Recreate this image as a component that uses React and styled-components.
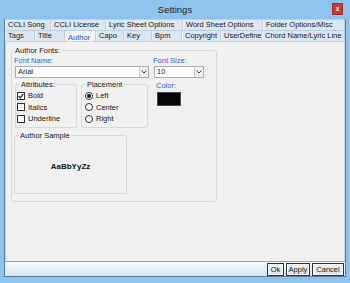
import React from 'react';
import styled, { createGlobalStyle } from 'styled-components';

const Global = createGlobalStyle`
  html, body { margin: 0; padding: 0; background: #8fc3ef; }
  body { font-family: "Liberation Sans", Arial, sans-serif; }
  * { box-sizing: border-box; }
`;

const Window = styled.div`
  width: 350px;
  height: 283px;
  background: #8fc3ef;
  display: flex;
  flex-direction: column;
  padding: 0 4px 6px 4px;
  font-family: "Liberation Sans", Arial, sans-serif;
  font-size: 7.5px;
  color: #1b1b1b;
`;

const TitleBar = styled.div`
  height: 19px;
  flex: none;
  display: grid;
  grid-template-columns: 1fr auto 1fr;
  align-items: start;
`;

const Title = styled.div`
  grid-column: 2;
  font-size: 9.5px;
  line-height: 19px;
  color: #1e1e1e;
`;

const CloseBtn = styled.div`
  grid-column: 3;
  justify-self: end;
  margin: 3px 3px 0 0;
  width: 11px;
  height: 12px;
  background: #c8383a;
  border: 1px solid #a52a2c;
  color: #fff;
  font-size: 6.5px;
  font-weight: bold;
  line-height: 10px;
  text-align: center;
`;

const Client = styled.div`
  flex: 1;
  display: flex;
  flex-direction: column;
  background: #f0f0f0;
  border: 1px solid #5d7c9c;
  border-top: none;
`;

const TabRow = styled.div`
  display: flex;
  height: 11px;
  flex: none;
`;

const Tab = styled.div`
  flex: 0 0 ${p => p.$w}px;
  background: ${p => (p.$active ? '#f2f4f6' : '#dbe6f0')};
  border-top: 1px solid #c3d0dc;
  border-right: 1px solid #c3d0dc;
  box-shadow: inset 1px 0 0 #eef3f8;
  color: ${p => (p.$active ? '#2a55c8' : '#1b1b1b')};
  padding: ${p => (p.$active ? '2px' : '0')} 0 0 3px;
  line-height: 10px;
  white-space: nowrap;
  overflow: hidden;
`;

const TabPage = styled.div`
  height: 220px;
  flex: none;
  border: 1px solid #cbd4dd;
  border-bottom: none;
  padding: 4px 0 0 5px;
`;

const Group = styled.fieldset`
  margin: ${p => p.$m || '0'};
  width: ${p => p.$w}px;
  border: 1px solid #d6dadf;
  border-radius: 2px;
  padding: ${p => p.$pad || '0'};
  min-width: 0;
`;

const Caption = styled.legend`
  font-size: 7.5px;
  line-height: 9px;
  padding: 0 1px;
  margin-left: ${p => p.$ml || 0}px;
  color: #1b1b1b;
`;

const Row = styled.div`
  display: flex;
  align-items: flex-start;
  gap: ${p => p.$gap || 0}px;
  margin-top: ${p => p.$mt || 0}px;
`;

const Field = styled.div`
  display: flex;
  flex-direction: column;
  width: ${p => p.$w}px;
  margin-left: ${p => p.$ml || 0}px;
`;

const BlueLabel = styled.div`
  color: #3867de;
  line-height: 9px;
  margin-left: -1px;
  margin-top: ${p => p.$mt || 0}px;
`;

const Combo = styled.div`
  margin-top: 1px;
  height: 12px;
  background: #fff;
  border: 1px solid #acb0b6;
  display: flex;
  align-items: center;
`;

const ComboText = styled.div`
  flex: 1;
  padding-left: 2px;
  line-height: 10px;
`;

const ComboArrow = styled.div`
  width: 9px;
  height: 10px;
  background: #f0f0f0;
  border-left: 1px solid #c8ccd2;
  display: flex;
  align-items: center;
  justify-content: center;
`;

const OptionRow = styled.div`
  height: 11.5px;
  display: flex;
  align-items: center;
  gap: 3px;
  line-height: 9px;
`;

const Box = styled.div`
  width: 8px;
  height: 8px;
  border: 1px solid #333;
  background: #fff;
  display: flex;
  align-items: center;
  justify-content: center;
`;

const Radio = styled.div`
  width: 8px;
  height: 8px;
  border-radius: 50%;
  border: 1px solid #333;
  background: #fff;
  display: flex;
  align-items: center;
  justify-content: center;
  &::after {
    content: '';
    display: ${p => (p.$on ? 'block' : 'none')};
    width: 4px;
    height: 4px;
    border-radius: 50%;
    background: #1b1b1b;
  }
`;

const ColorCol = styled.div`
  display: flex;
  flex-direction: column;
  margin-left: 9px;
  padding-top: 1px;
`;

const Swatch = styled.div`
  margin-top: 2px;
  width: 24px;
  height: 14px;
  background: #050505;
  border: 1px solid #3b4b5c;
`;

const SampleArea = styled.div`
  height: 53px;
  display: flex;
  align-items: center;
  justify-content: center;
  font-weight: bold;
  font-size: 8px;
  color: #111;
`;

const Strip = styled.div`
  height: 15px;
  flex: none;
  border-top: 1px solid #a3a3a3;
  background: linear-gradient(#f6f9fc, #d6e3f0);
  display: flex;
  justify-content: flex-end;
  align-items: center;
  gap: 2px;
  padding: 1px 1px 0 0;
`;

const Button = styled.div`
  width: ${p => p.$w}px;
  height: 13px;
  border: 1px solid #343434;
  box-shadow: inset 0 0 0 1px #f7f9fb;
  background: linear-gradient(#eef2f6, #dce4ec);
  text-align: center;
  line-height: 11px;
`;

const Chevron = () => (
  <svg width="6" height="4" viewBox="0 0 6 4">
    <path d="M0.5 0.5 L3 3 L5.5 0.5" fill="none" stroke="#444" strokeWidth="1" />
  </svg>
);

const Check = () => (
  <svg width="6" height="6" viewBox="0 0 6 6">
    <path d="M0.6 3 L2.3 4.8 L5.4 0.8" fill="none" stroke="#222" strokeWidth="1.2" />
  </svg>
);

const row1 = [
  ['CCLI Song', 46], ['CCLI License', 55], ['Lyric Sheet Options', 77],
  ['Word Sheet Options', 80], ['Folder Options/Misc', 82],
];
const row2 = [
  ['Tags', 30], ['Title', 30], ['Author', 31], ['Capo', 28], ['Key', 28],
  ['Bpm', 30], ['Copyright', 39], ['UserDefine', 41], ['Chord Name/Lyric Line', 83],
];

export default function App() {
  return (
    <Window>
      <Global />
      <TitleBar>
        <Title>Settings</Title>
        <CloseBtn>x</CloseBtn>
      </TitleBar>
      <Client>
        <TabRow>
          {row1.map(([t, w]) => <Tab key={t} $w={w}>{t}</Tab>)}
        </TabRow>
        <TabRow>
          {row2.map(([t, w]) => <Tab key={t} $w={w} $active={t === 'Author'}>{t}</Tab>)}
        </TabRow>
        <TabPage>
          <Group $w={206} $pad="0 0 7px 3px">
            <Caption $ml={-1}>Author Fonts:</Caption>
            <Row $gap={5} $mt={1}>
              <Field $w={134}>
                <BlueLabel>Font Name:</BlueLabel>
                <Combo><ComboText>Arial</ComboText><ComboArrow><Chevron /></ComboArrow></Combo>
              </Field>
              <Field $w={50}>
                <BlueLabel>Font Size:</BlueLabel>
                <Combo><ComboText>10</ComboText><ComboArrow><Chevron /></ComboArrow></Combo>
              </Field>
            </Row>
            <Row $mt={2}>
              <Group $w={62} $pad="1px 0 2px 1px">
                <Caption $ml={3}>Attributes:</Caption>
                <OptionRow><Box><Check /></Box>Bold</OptionRow>
                <OptionRow><Box />Italics</OptionRow>
                <OptionRow><Box />Underline</OptionRow>
              </Group>
              <Group $w={67} $m="0 0 0 4px" $pad="1px 0 2px 3px">
                <Caption $ml={1}>Placement</Caption>
                <OptionRow><Radio $on />Left</OptionRow>
                <OptionRow><Radio />Center</OptionRow>
                <OptionRow><Radio />Right</OptionRow>
              </Group>
              <ColorCol>
                <BlueLabel>Color:</BlueLabel>
                <Swatch />
              </ColorCol>
            </Row>
            <Row $mt={3}>
              <Group $w={113} $m="0 0 0 -1px" $pad="0">
                <Caption $ml={4}>Author Sample</Caption>
                <SampleArea>AaBbYyZz</SampleArea>
              </Group>
            </Row>
          </Group>
        </TabPage>
        <Strip>
          <Button $w={17}>Ok</Button>
          <Button $w={24}>Apply</Button>
          <Button $w={32}>Cancel</Button>
        </Strip>
      </Client>
    </Window>
  );
}
